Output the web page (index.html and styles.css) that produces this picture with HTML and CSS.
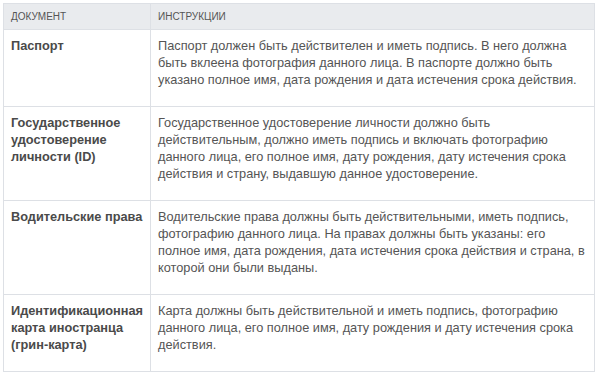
FILE: index.html
```html
<!DOCTYPE html>
<html lang="ru">
<head>
<meta charset="utf-8">
<link rel="stylesheet" href="styles.css">
</head>
<body>
<table class="docs">
  <thead>
    <tr><th class="c1">Документ</th><th>Инструкции</th></tr>
  </thead>
  <tbody>
    <tr>
      <td class="name">Паспорт</td>
      <td><p>Паспорт должен быть действителен и иметь подпись. В него должна быть вклеена фотография данного лица. В паспорте должно быть указано полное имя, дата рождения и дата истечения срока действия.</p></td>
    </tr>
    <tr>
      <td class="name">Государственное удостоверение личности (ID)</td>
      <td><p>Государственное удостоверение личности должно быть действительным, должно иметь подпись и включать фотографию данного лица, его полное имя, дату рождения, дату истечения срока действия и страну, выдавшую данное удостоверение.</p></td>
    </tr>
    <tr>
      <td class="name">Водительские права</td>
      <td><p>Водительские права должны быть действительными, иметь подпись, фотографию данного лица. На правах должны быть указаны: его полное имя, дата рождения, дата истечения срока действия и страна, в которой они были выданы.</p></td>
    </tr>
    <tr>
      <td class="name">Идентификационная карта иностранца (грин-карта)</td>
      <td><p>Карта должны быть действительной и иметь подпись, фотографию данного лица, его полное имя, дату рождения и дату истечения срока действия.</p></td>
    </tr>
  </tbody>
</table>
</body>
</html>
```
FILE: styles.css
```css
html, body {
  margin: 0;
  padding: 0;
  background: #fff;
}
body {
  padding: 3px 4px 0 3px;
  font-family: "Liberation Sans", Arial, sans-serif;
  font-size: 12.75px;
  line-height: 17px;
  color: #555;
}
.docs {
  width: 592px;
  table-layout: fixed;
  border-collapse: collapse;
  border: 1px solid #dde0e5;
}
.docs th, .docs td {
  border: 1px solid #dde0e5;
  text-align: left;
  vertical-align: top;
  padding: 7px 7px 0 7px;
}
.docs th {
  background: #e9ebee;
  font-weight: normal;
  font-size: 10px;
  text-transform: uppercase;
  color: #555;
  height: 18px;
  padding-top: 7px;
  line-height: 12px;
}
.docs th.c1 {
  width: 132px;
}
.docs td.name {
  font-weight: bold;
  color: #4a4a4a;
  padding-bottom: 18px;
}
.docs td p {
  margin: 0 0 18px 0;
}
```
